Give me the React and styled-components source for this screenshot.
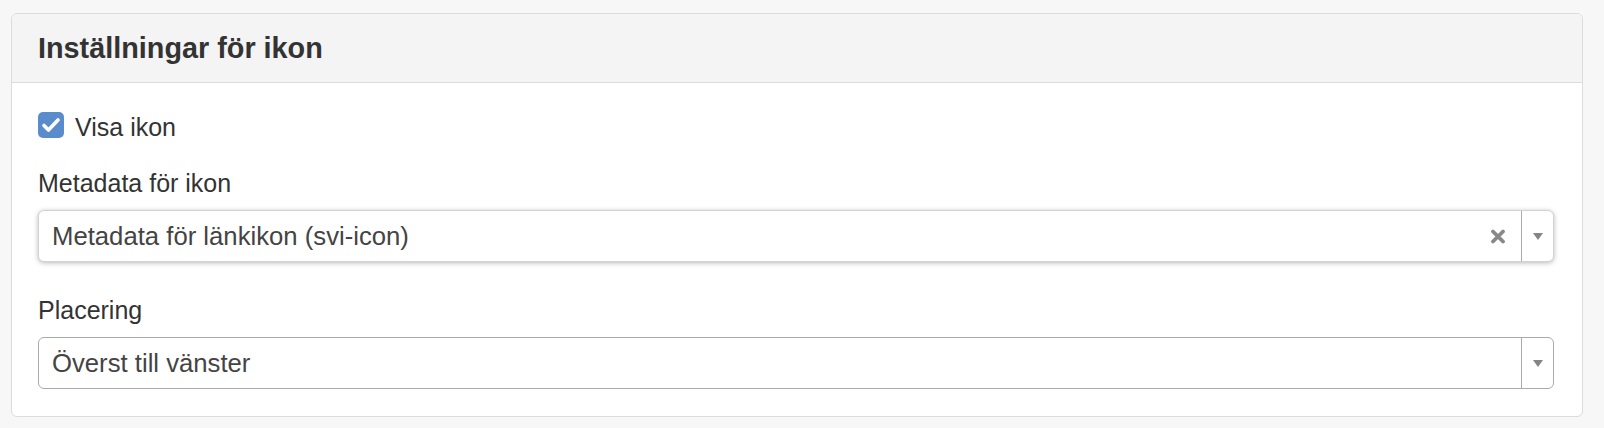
import React from "react";
import styled, { createGlobalStyle } from "styled-components";

const GlobalStyle = createGlobalStyle`
  html, body {
    margin: 0;
    padding: 0;
    background: #f7f7f7;
  }
  body {
    font-family: "Liberation Sans", Arial, Helvetica, sans-serif;
    color: #333;
  }
`;

const Page = styled.div`
  padding: 13px 21px 12px 11px;
`;

const Panel = styled.section`
  background: #fff;
  border: 1px solid #dcdcdc;
  border-radius: 6px;
  overflow: hidden;
`;

const PanelHeader = styled.header`
  height: 68px;
  display: flex;
  align-items: center;
  padding: 0 26px;
  background: #f4f4f4;
  border-bottom: 1px solid #dcdcdc;
`;

const PanelTitle = styled.h3`
  margin: 0;
  font-size: 28.8px;
  font-weight: 700;
  line-height: 68px;
  color: #333;
`;

const PanelBody = styled.div`
  display: flex;
  flex-direction: column;
  padding: 26px 28px 27px 26px;
`;

const CheckRow = styled.label`
  display: flex;
  align-items: flex-start;
  gap: 11px;
  font-size: 25px;
  line-height: 36px;
  color: #333;
  margin-bottom: 20px;
`;

const CheckBox = styled.span`
  width: 26px;
  height: 26px;
  margin-top: 3px;
  border-radius: 5px;
  background: #5a8ccb;
  display: flex;
  align-items: center;
  justify-content: center;
  flex: none;
`;

const FieldLabel = styled.div`
  font-size: 25px;
  line-height: 36px;
  color: #333;
  margin-bottom: 9px;
`;

const Field = styled.div`
  display: flex;
  flex-direction: column;
  margin-bottom: ${(p) => (p.$last ? "0" : "30px")};
`;

const Select = styled.div`
  height: 52px;
  box-sizing: border-box;
  display: flex;
  align-items: stretch;
  background: #fff;
  border-radius: 6px;
  border: 1px solid ${(p) => (p.$active ? "#d2d2d2" : "#aaa")};
  box-shadow: ${(p) => (p.$active ? "0 1px 5px rgba(0,0,0,0.28)" : "none")};
`;

const SelectValue = styled.div`
  flex: 1;
  display: flex;
  align-items: center;
  padding-left: 13px;
  font-size: 25.7px;
  color: #444;
  white-space: nowrap;
`;

const ClearButton = styled.span`
  display: flex;
  align-items: center;
  justify-content: center;
  width: 40px;
  padding-top: 1px;
  margin-right: 3px;
`;

const ArrowCell = styled.span`
  width: 31px;
  border-left: 1px solid #aaa;
  display: flex;
  align-items: center;
  justify-content: center;
`;

const Arrow = styled.span`
  width: 0;
  height: 0;
  border-left: 5.5px solid transparent;
  border-right: 5.5px solid transparent;
  border-top: 7px solid #858585;
  margin-left: 1px;
`;

function ChosenSelect({ value, active, clearable }) {
  return (
    <Select $active={active}>
      <SelectValue>{value}</SelectValue>
      {clearable && (
        <ClearButton>
          <svg width="16" height="15" viewBox="0 0 16 15">
            <path
              d="M3 2.5 L13 12.5 M13 2.5 L3 12.5"
              stroke="#888"
              strokeWidth="3.8"
              strokeLinecap="round"
            />
          </svg>
        </ClearButton>
      )}
      <ArrowCell>
        <Arrow />
      </ArrowCell>
    </Select>
  );
}

export default function App() {
  return (
    <>
      <GlobalStyle />
      <Page>
        <Panel>
          <PanelHeader>
            <PanelTitle>Inställningar för ikon</PanelTitle>
          </PanelHeader>
          <PanelBody>
            <CheckRow>
              <CheckBox>
                <svg width="26" height="26" viewBox="0 0 26 26">
                  <path
                    d="M6 13.5 L10.5 18 L20 8"
                    fill="none"
                    stroke="#fff"
                    strokeWidth="3.6"
                    strokeLinecap="round"
                    strokeLinejoin="round"
                  />
                </svg>
              </CheckBox>
              Visa ikon
            </CheckRow>
            <Field>
              <FieldLabel>Metadata för ikon</FieldLabel>
              <ChosenSelect value="Metadata för länkikon (svi-icon)" active clearable />
            </Field>
            <Field $last>
              <FieldLabel>Placering</FieldLabel>
              <ChosenSelect value="Överst till vänster" />
            </Field>
          </PanelBody>
        </Panel>
      </Page>
    </>
  );
}
